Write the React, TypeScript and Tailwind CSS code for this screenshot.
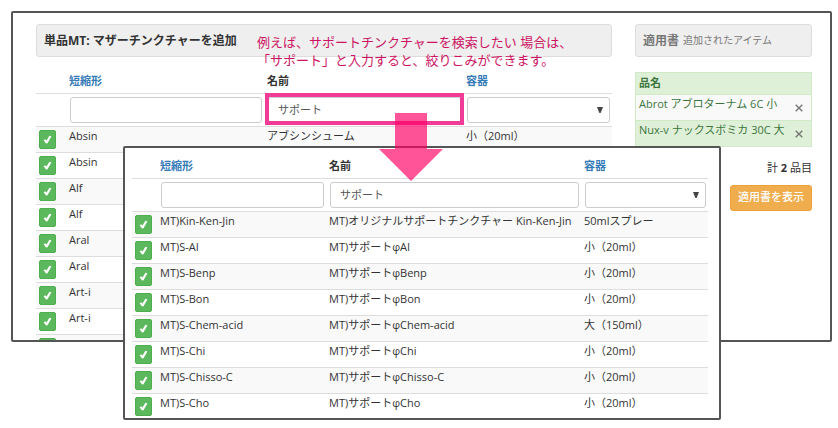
import type { ReactNode } from "react";

type Item = { code: string; name?: string; size?: string };

const tinctures: Item[] = [
  { code: "Absin", name: "アブシンシューム", size: "小（20ml）" },
  { code: "Absin" },
  { code: "Alf" },
  { code: "Alf" },
  { code: "Aral" },
  { code: "Aral" },
  { code: "Art-i" },
  { code: "Art-i" },
  { code: "" },
];

const filtered: Item[] = [
  { code: "MT)Kin-Ken-Jin", name: "MT)オリジナルサポートチンクチャー Kin-Ken-Jin", size: "50mlスプレー" },
  { code: "MT)S-AI", name: "MT)サポートφAI", size: "小（20ml）" },
  { code: "MT)S-Benp", name: "MT)サポートφBenp", size: "小（20ml）" },
  { code: "MT)S-Bon", name: "MT)サポートφBon", size: "小（20ml）" },
  { code: "MT)S-Chem-acid", name: "MT)サポートφChem-acid", size: "大（150ml）" },
  { code: "MT)S-Chi", name: "MT)サポートφChi", size: "小（20ml）" },
  { code: "MT)S-Chisso-C", name: "MT)サポートφChisso-C", size: "小（20ml）" },
  { code: "MT)S-Cho", name: "MT)サポートφCho", size: "小（20ml）" },
];

const selected = ["Abrot アブロターナム 6C 小", "Nux-v ナックスボミカ 30C 大"];

const control =
  "block h-[26px] w-full appearance-none rounded-[3px] border border-[#ccc] bg-white px-[9px] pb-[2px] text-[11px] text-[#555] outline-none";
const headCell = "pt-[11px] pb-[5px] px-[3px] text-left font-bold leading-[14px] whitespace-nowrap";
const filterCell = "border-t border-[#ddd] py-[3px] pl-1 pr-0.5";
const bodyCell = "border-t border-[#ddd] px-[3px] pt-[2px] align-top leading-[13px] whitespace-nowrap";

function CheckButton() {
  return (
    <button
      type="button"
      aria-label="追加"
      className="flex h-[19px] w-[17px] items-center justify-center rounded-[2px] border border-[#4cae4c] bg-[#5cb85c]"
    >
      <svg viewBox="0 0 9 9" className="h-[9px] w-[9px]" aria-hidden="true">
        <path d="M0.6 5.2L2.2 4.2L3.5 5.5L6.4 0.8L8.4 1.4L4.5 8.2L3 8.4Z" fill="#fff" />
      </svg>
    </button>
  );
}

function ItemTable({ items, cols, highlight }: { items: Item[]; cols: ReactNode; highlight?: boolean }) {
  return (
    <table className="w-full table-fixed border-separate border-spacing-0">
      <colgroup>{cols}</colgroup>
      <thead>
        <tr>
          <td />
          <th className={headCell}>
            <a href="#code" className="text-[#337ab7]">短縮形</a>
          </th>
          <th className={headCell}>名前</th>
          <th className={headCell}>
            <a href="#size" className="text-[#337ab7]">容器</a>
          </th>
        </tr>
        <tr>
          <td className={filterCell} />
          <td className={filterCell}>
            <input type="text" aria-label="短縮形" className={control} />
          </td>
          <td className={filterCell}>
            <div className="relative">
              <input type="text" aria-label="名前" defaultValue="サポート" className={control} />
              {highlight && (
                <div className="pointer-events-none absolute -inset-x-[3px] -top-1 -bottom-0.5 border-4 border-[#f03c96]" />
              )}
            </div>
          </td>
          <td className={filterCell}>
            <div className="relative">
              <select aria-label="容器" className={control}>
                <option value="" />
              </select>
              <svg
                viewBox="0 0 6 6"
                className="pointer-events-none absolute top-[10px] right-[7px] h-[6px] w-[6px]"
                aria-hidden="true"
              >
                <path d="M0 0H6L3.6 6H2.4Z" fill="#444" />
              </svg>
            </div>
          </td>
        </tr>
      </thead>
      <tbody>
        {items.map((item, i) => (
          <tr key={i} className="odd:bg-[#f9f9f9]">
            <td className="border-t border-[#ddd] p-[3px]">
              <CheckButton />
            </td>
            <td className={bodyCell}>{item.code}</td>
            <td className={bodyCell}>{item.name}</td>
            <td className={bodyCell}>{item.size}</td>
          </tr>
        ))}
      </tbody>
    </table>
  );
}

export default function App() {
  return (
    <div className="relative bg-white pt-[11px] pr-[6px] pb-[86px] pl-[11px] font-['Open_Sans','Noto_Sans_CJK_JP',sans-serif] text-[11px] text-[#333]">
      <div className="grid h-[331px] grid-cols-[minmax(0,1fr)_177px] gap-[23px] overflow-hidden rounded-[2px] border-2 border-[#555] pt-[11px] pr-[18px] pl-[23px]">
        <main>
          <h1 className="mb-[6px] flex h-[33px] items-center rounded-[3px] border border-[#ddd] bg-[#efefef] px-[7px] text-[12px] font-bold">
            単品MT: マザーチンクチャーを追加
          </h1>
          <ItemTable
            items={tinctures}
            highlight
            cols={
              <>
                <col className="w-[30px]" />
                <col className="w-[198px]" />
                <col className="w-[199px]" />
                <col className="w-[149px]" />
              </>
            }
          />
        </main>
        <aside>
          <h2 className="mb-[15px] flex h-[33px] items-center gap-1 rounded-[3px] border border-[#ddd] bg-[#efefef] px-[7px] text-[12px] font-bold text-[#777]">
            適用書 <small className="text-[10px] font-normal">追加されたアイテム</small>
          </h2>
          <table className="w-full border-separate border-spacing-0 border-x border-b border-[#d0e9c6] text-[#3c763d]">
            <thead>
              <tr className="bg-[#dff0d8]">
                <th colSpan={2} className="h-[22px] border-t border-[#d0e9c6] px-[3px] pb-[2px] text-left font-bold leading-[14px]">
                  品名
                </th>
              </tr>
            </thead>
            <tbody>
              {selected.map((name) => (
                <tr key={name} className="odd:bg-[#f9f9f9] even:bg-[#dff0d8]">
                  <td className="h-[26px] border-t border-[#d0e9c6] px-[3px] pt-[2px] align-top leading-[13px] whitespace-nowrap">{name}</td>
                  <td className="w-[24px] border-t border-[#d0e9c6] align-middle">
                    <button type="button" aria-label="削除" className="flex h-[20px] w-full items-center justify-center">
                      <svg viewBox="0 0 8 8" className="h-[8px] w-[8px]" aria-hidden="true">
                        <path d="M0.7 0.7L7.3 7.3M7.3 0.7L0.7 7.3" stroke="#777" strokeWidth="1.4" />
                      </svg>
                    </button>
                  </td>
                </tr>
              ))}
            </tbody>
          </table>
          <p className="mt-[13px] text-right leading-[16px]">
            計 <strong>2</strong> 品目
          </p>
          <div className="mt-[9px] flex justify-end">
            <button
              type="button"
              className="h-[26px] rounded-[3px] border border-[#eea236] bg-[#f0ad4e] px-[7px] pb-[2px] font-medium text-white"
            >
              適用書を表示
            </button>
          </div>
        </aside>
      </div>

      <p className="absolute top-[33px] left-[257px] text-[13px] leading-[18px] whitespace-nowrap text-[#cc1462]">
        例えば、サポートチンクチャーを検索したい 場合は、
        <br />
        「サポート」と入力すると、絞りこみができます。
      </p>

      <section className="absolute top-[146px] right-[117px] left-[123px] h-[274px] overflow-hidden rounded-[2px] border-2 border-[#555] bg-white pr-[11px] pl-[7px]">
        <ItemTable
          items={filtered}
          cols={
            <>
              <col className="w-[25px]" />
              <col className="w-[169px]" />
              <col className="w-[255px]" />
              <col className="w-[127px]" />
            </>
          }
        />
      </section>

      <svg
        viewBox="0 0 64 68"
        className="pointer-events-none absolute top-[113px] left-[379px] h-[68px] w-[64px]"
        aria-hidden="true"
      >
        <path d="M16 0H48V36H64L32 68L0 36H16Z" fill="#ff0064" fillOpacity="0.665" />
      </svg>
    </div>
  );
}
